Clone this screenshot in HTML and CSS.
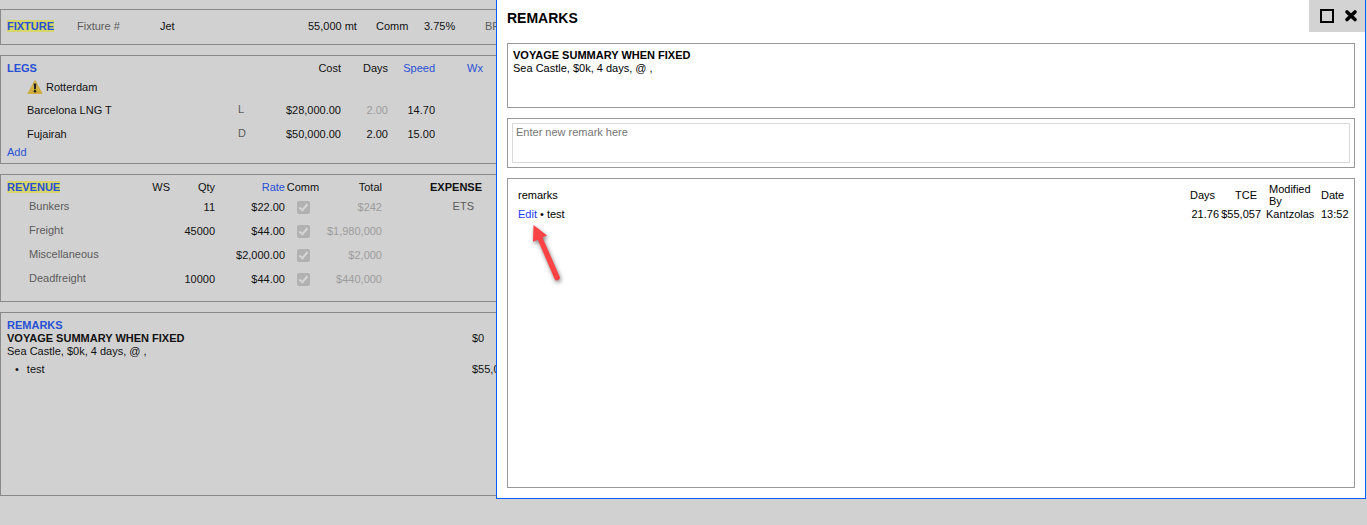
FILE: index.html
```html
<!DOCTYPE html>
<html lang="en">
<head>
    <meta charset="UTF-8">
    <meta name="viewport" content="width=device-width, initial-scale=1.0">
    <title>Remarks</title>
    <link rel="stylesheet" href="styles.css">
</head>
<body>

<main class="page">
    <section class="panel fixture">
        <a class="title" href="#fixture"><mark>FIXTURE</mark></a>
        <span class="muted">Fixture #</span>
        <span>Jet</span>
        <span>55,000 mt</span>
        <span>Comm</span>
        <span>3.75%</span>
        <span class="muted">BF</span>
    </section>

    <section class="panel">
        <table class="grid legs">
            <colgroup>
                <col class="c-port"><col class="c-type"><col class="c-cost"><col class="c-days"><col class="c-speed"><col class="c-wx"><col>
            </colgroup>
            <thead>
                <tr>
                    <th class="left"><a class="title" href="#legs">LEGS</a></th>
                    <th></th>
                    <th>Cost</th>
                    <th>Days</th>
                    <th><a href="#speed">Speed</a></th>
                    <th><a href="#wx">Wx</a></th>
                    <th></th>
                </tr>
            </thead>
            <tbody>
                <tr class="first">
                    <td class="port">
                        <span class="warn">
                            <svg width="16" height="16" viewBox="0 0 16 16" aria-hidden="true">
                                <defs>
                                    <linearGradient id="warnFill" x1="0" y1="0" x2="0" y2="1">
                                        <stop offset="0" stop-color="#d9c66c"/>
                                        <stop offset="1" stop-color="#cfa92c"/>
                                    </linearGradient>
                                </defs>
                                <path d="M8 .8 14.800 13.400H1.200Z" fill="url(#warnFill)" stroke="#cfae48" stroke-width="1.2" stroke-linejoin="round"/>
                                <path d="M6.700 3.600h2.600L8.900 9.200H7.100Z" fill="#222"/>
                                <circle cx="8" cy="11.200" r="1.300" fill="#222"/>
                            </svg>
                            Rotterdam
                        </span>
                    </td>
                    <td></td><td></td><td></td><td></td><td></td><td></td>
                </tr>
                <tr>
                    <td class="port">Barcelona LNG T</td>
                    <td class="left label">L</td>
                    <td>$28,000.00</td>
                    <td class="faded">2.00</td>
                    <td>14.70</td>
                    <td></td><td></td>
                </tr>
                <tr>
                    <td class="port">Fujairah</td>
                    <td class="left label">D</td>
                    <td>$50,000.00</td>
                    <td>2.00</td>
                    <td>15.00</td>
                    <td></td><td></td>
                </tr>
            </tbody>
        </table>
        <a class="add" href="#add">Add</a>
    </section>

    <section class="panel revenue-panel">
        <table class="grid revenue">
            <colgroup>
                <col class="c-item"><col class="c-ws"><col class="c-qty"><col class="c-rate"><col class="c-comm"><col class="c-total"><col class="c-expense"><col>
            </colgroup>
            <thead>
                <tr>
                    <th class="left"><a class="title" href="#revenue"><mark>REVENUE</mark></a></th>
                    <th>WS</th>
                    <th>Qty</th>
                    <th><a href="#rate">Rate</a></th>
                    <th class="center">Comm</th>
                    <th>Total</th>
                    <th class="strong">EXPENSE</th>
                    <th></th>
                </tr>
            </thead>
            <tbody>
                <tr class="first">
                    <td class="item label">Bunkers</td>
                    <td></td>
                    <td>11</td>
                    <td>$22.00</td>
                    <td class="center"><input type="checkbox" class="check" aria-label="Bunkers commission" checked disabled></td>
                    <td class="faded">$242</td>
                    <td class="label expense">ETS</td>
                    <td></td>
                </tr>
                <tr>
                    <td class="item label">Freight</td>
                    <td></td>
                    <td>45000</td>
                    <td>$44.00</td>
                    <td class="center"><input type="checkbox" class="check" aria-label="Freight commission" checked disabled></td>
                    <td class="faded">$1,980,000</td>
                    <td></td><td></td>
                </tr>
                <tr>
                    <td class="item label">Miscellaneous</td>
                    <td></td>
                    <td></td>
                    <td>$2,000.00</td>
                    <td class="center"><input type="checkbox" class="check" aria-label="Miscellaneous commission" checked disabled></td>
                    <td class="faded">$2,000</td>
                    <td></td><td></td>
                </tr>
                <tr>
                    <td class="item label">Deadfreight</td>
                    <td></td>
                    <td>10000</td>
                    <td>$44.00</td>
                    <td class="center"><input type="checkbox" class="check" aria-label="Deadfreight commission" checked disabled></td>
                    <td class="faded">$440,000</td>
                    <td></td><td></td>
                </tr>
            </tbody>
        </table>
    </section>

    <section class="panel remarks-panel">
        <a class="title" href="#remarks">REMARKS</a>
        <div class="remark-row">
            <div>
                <strong>VOYAGE SUMMARY WHEN FIXED</strong><br>
                Sea Castle, $0k, 4 days, @ ,
            </div>
            <span>$0</span>
        </div>
        <div class="remark-row">
            <div class="bulleted"><span>•</span>test</div>
            <span>$55,057</span>
        </div>
    </section>
</main>

<div class="modal" role="dialog" aria-labelledby="modalTitle">
    <header class="modal-head">
        <h1 id="modalTitle">REMARKS</h1>
        <div class="modal-tools">
            <button type="button" aria-label="Maximize">
                <svg width="14" height="14" viewBox="0 0 14 14"><rect x="1" y="1" width="12" height="12" fill="none" stroke="#000" stroke-width="2"/></svg>
            </button>
            <button type="button" aria-label="Close">
                <svg width="14" height="14" viewBox="0 0 14 14"><path d="M3 3 11 10.500M11 3 3 10.500" stroke="#000" stroke-width="3.600" stroke-linecap="round"/></svg>
            </button>
        </div>
    </header>

    <div class="modal-body">
        <div class="box summary">
            <strong>VOYAGE SUMMARY WHEN FIXED</strong><br>
            Sea Castle, $0k, 4 days, @ ,
        </div>

        <div class="box entry">
            <textarea placeholder="Enter new remark here" aria-label="New remark"></textarea>
        </div>

        <div class="box history">
            <table class="log">
                <colgroup>
                    <col><col class="l-days"><col class="l-tce"><col class="l-by"><col class="l-date">
                </colgroup>
                <thead>
                    <tr>
                        <th class="left">remarks</th>
                        <th>Days</th>
                        <th>TCE</th>
                        <th class="by">Modified By</th>
                        <th class="left date">Date</th>
                    </tr>
                </thead>
                <tbody>
                    <tr>
                        <td class="left"><a href="#edit">Edit</a> • test</td>
                        <td>21.76</td>
                        <td>$55,057</td>
                        <td class="by">Kantzolas</td>
                        <td class="left date">13:52</td>
                    </tr>
                </tbody>
            </table>
            <!-- pointer to the Edit link -->
            <svg class="arrow" width="40" height="66" viewBox="0 0 40 66" aria-hidden="true">
                <path d="M5.500 2 19 12.500 14.500 14.500 31.600 53.500A2.800 2.800 0 0 1 26.600 56L9.800 16.700 5 18.800Z" fill="#fb4345"/>
            </svg>
        </div>
    </div>
</div>

</body>
</html>
```
FILE: styles.css
```css
* {
    box-sizing: border-box;
}

body {
    background-color: #d1d1d1;
    color: #111;
    font-family: "Liberation Sans", Arial, Helvetica, sans-serif;
    font-size: 11px;
    line-height: 13px;
    margin: 0;
    overflow: hidden;
}

a {
    color: #2850d4;
    text-decoration: none;
}

mark {
    background-color: #d5d56c;
    color: inherit;
}

table {
    border-collapse: collapse;
    table-layout: fixed;
    width: 100%;
}

th, td {
    font-weight: normal;
    padding: 0;
    text-align: right;
    vertical-align: middle;
}

/* Page behind the dialog */

.page {
    display: flex;
    flex-direction: column;
    gap: 10px;
    padding: 9px 10px 0 0;
}

.panel {
    border: 1px solid #8a8a8a;
    padding: 3px 6px 4px;
}

.title {
    font-weight: bold;
}

.muted, .grid .label {
    color: #5c5c5c;
}

.faded {
    color: #9c9c9c;
}

.left {
    text-align: left;
}

.center {
    text-align: center;
}

.strong {
    font-weight: bold;
}

.fixture {
    align-items: center;
    display: grid;
    grid-template-columns: 70px 83px 148px 68px 48px 61px 1fr;
    min-height: 36px;
}

.grid .label {
    padding-bottom: 2px;
}

.grid thead tr {
    height: 18px;
}

.grid tbody tr {
    height: 24px;
}

.legs tbody .first {
    height: 21px;
}

.revenue tbody .first {
    height: 23px;
}

.grid .port {
    padding-left: 20px;
    text-align: left;
}

.grid .item {
    padding-left: 22px;
    text-align: left;
}

.grid .expense {
    padding-right: 8px;
}

.c-port { width: 231px; }
.c-type { width: 20px; }
.c-cost { width: 83px; }
.c-days, .c-speed { width: 47px; }
.c-wx { width: 48px; }

.c-item { width: 133px; }
.c-ws { width: 30px; }
.c-qty { width: 45px; }
.c-rate { width: 70px; }
.c-comm { width: 36px; }
.c-total { width: 61px; }
.c-expense { width: 100px; }

.warn {
    align-items: center;
    display: flex;
    gap: 3px;
}

.add {
    display: block;
}

.revenue-panel {
    padding-bottom: 10px;
}

.check {
    appearance: none;
    background-color: #b1b1b1;
    border-radius: 2px;
    display: block;
    height: 13px;
    margin: 0 auto;
    padding: 1px 4px;
    width: 13px;
}

.check::before {
    border: solid #d6d6d6;
    border-width: 0 2px 2px 0;
    box-sizing: border-box;
    content: "";
    display: block;
    height: 9px;
    transform: rotate(40deg);
    width: 5px;
}

.remarks-panel {
    min-height: 184px;
    padding-top: 5px;
}

.remarks-panel .title {
    display: block;
    line-height: 14px;
}

.remark-row {
    display: grid;
    grid-template-columns: 465px 1fr;
    margin-bottom: 5px;
}

.bulleted {
    display: flex;
    gap: 8px;
    padding-left: 8px;
}

/* Dialog */

.modal {
    background-color: #fff;
    border: 1px solid #0a5cff;
    border-top: 0;
    color: #000;
    left: 496px;
    position: absolute;
    right: 1px;
    top: 0;
}

.modal a {
    color: #1a3cff;
}

.modal-head {
    display: flex;
    justify-content: space-between;
    padding-left: 10px;
}

.modal-head h1 {
    font-size: 14px;
    line-height: 16px;
    margin: 10px 0 0;
}

.modal-tools {
    background-color: #d3d3d3;
    display: flex;
    gap: 10px;
    height: 32px;
    padding: 9px 7px 9px 11px;
}

.modal-tools button {
    background: none;
    border: 0;
    height: 14px;
    padding: 0;
    width: 14px;
}

.modal-tools svg {
    display: block;
}

.modal-body {
    display: flex;
    flex-direction: column;
    gap: 10px;
    padding: 11px 10px 10px;
}

.box {
    border: 1px solid #999;
}

.summary {
    min-height: 65px;
    padding: 5px;
}

.entry {
    display: flex;
    padding: 4px;
}

.entry textarea {
    border: 1px solid #d9d9d9;
    flex: 1;
    font: inherit;
    height: 40px;
    outline: 0;
    padding: 2px 3px;
    resize: none;
}

.entry textarea::placeholder {
    color: #757575;
}

.history {
    min-height: 310px;
    padding: 4px 4px 4px 10px;
    position: relative;
}

.log th {
    line-height: 12px;
    padding-right: 4px;
}

.log td {
    height: 14px;
}

.log .by {
    padding: 0 0 0 5px;
    text-align: left;
}

.log th.by {
    padding: 0 4px 0 8px;
}

.l-days { width: 40px; }
.l-tce { width: 42px; }
.l-by { width: 60px; }
.l-date { width: 29px; }

.log .date {
    padding: 0;
}

.arrow {
    filter: drop-shadow(1px 2px 2px rgba(0, 0, 0, 0.5));
    left: 20px;
    position: absolute;
    top: 44px;
}
```
